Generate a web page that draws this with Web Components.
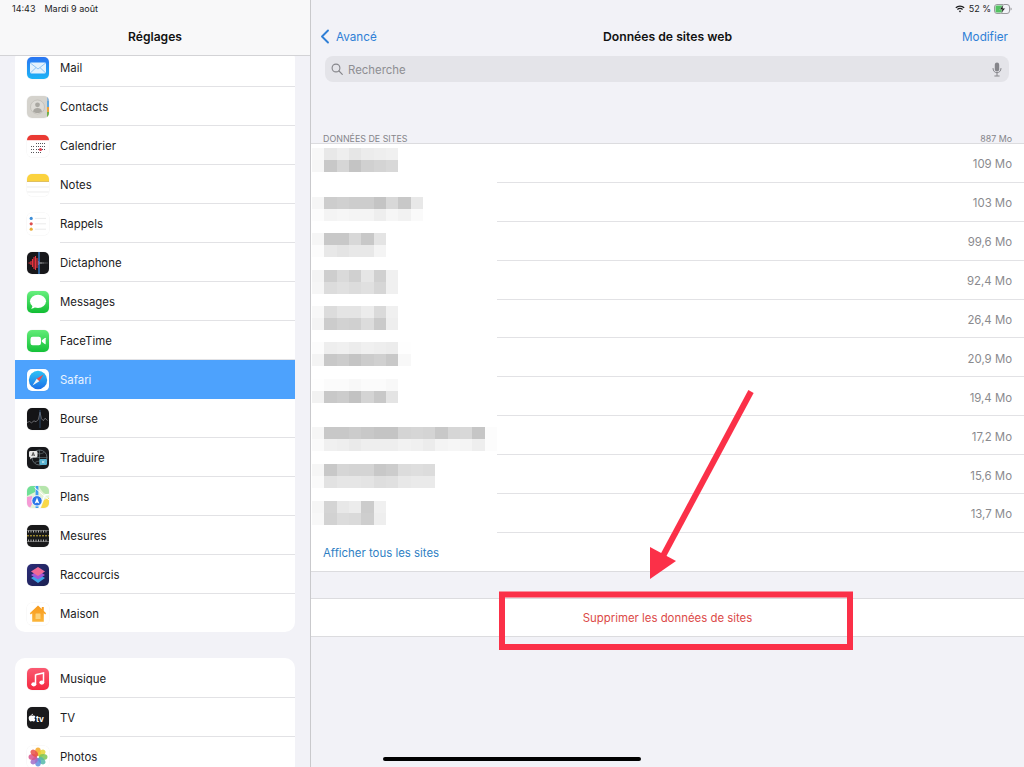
<!DOCTYPE html>
<html lang="fr">
<head>
<meta charset="utf-8">
<title>Réglages</title>
<style>
  html, body { margin: 0; height: 100%; overflow: hidden; background: #f2f2f7; }
  body { font-family: Inter, "Liberation Sans", sans-serif; color: #1c1c1e; }
</style>
</head>
<body>
<settings-app>
  <settings-sidebar slot="sidebar">
    <settings-group>
      <settings-row icon="mail">Mail</settings-row>
      <settings-row icon="contacts">Contacts</settings-row>
      <settings-row icon="calendar">Calendrier</settings-row>
      <settings-row icon="notes">Notes</settings-row>
      <settings-row icon="reminders">Rappels</settings-row>
      <settings-row icon="voice">Dictaphone</settings-row>
      <settings-row icon="messages">Messages</settings-row>
      <settings-row icon="facetime">FaceTime</settings-row>
      <settings-row icon="safari" selected>Safari</settings-row>
      <settings-row icon="stocks">Bourse</settings-row>
      <settings-row icon="translate">Traduire</settings-row>
      <settings-row icon="maps">Plans</settings-row>
      <settings-row icon="measure">Mesures</settings-row>
      <settings-row icon="shortcuts">Raccourcis</settings-row>
      <settings-row icon="home">Maison</settings-row>
    </settings-group>
    <settings-group>
      <settings-row icon="music">Musique</settings-row>
      <settings-row icon="tv">TV</settings-row>
      <settings-row icon="photos">Photos</settings-row>
    </settings-group>
  </settings-sidebar>
  <site-data-pane slot="detail">
    <site-row value="109 Mo" offset="4" cells="f8 e8 ee e6 ec ee f0|f6 c8 d6 c4 d0 d4 d8"></site-row>
    <site-row value="103 Mo" offset="14" cells="f6 cd d0 cd cd c4 d8 c8 e8|fc f4 f6 f4 f4 ee f6 f2 fa"></site-row>
    <site-row value="99,6 Mo" offset="11" cells="f6 c8 c8 d8 c8 e4|fc e8 e4 e8 e8 f4"></site-row>
    <site-row value="92,4 Mo" offset="9" cells="f4 ce da d0 e6 d0 f0|f6 dc e0 dc e0 d6 f0"></site-row>
    <site-row value="26,4 Mo" offset="6" cells="f8 dc e4 e4 ec da f0|f4 cc d2 d0 dc ca ee"></site-row>
    <site-row value="20,9 Mo" offset="4" cells="fc ee f0 ec f0 ee ec fe|f4 c8 cc c4 cc d0 c8 f8"></site-row>
    <site-row value="19,4 Mo" offset="2" cells="fe fb fb f8 fb fb f8|f2 c8 cc c2 d4 c8 e4"></site-row>
    <site-row value="17,2 Mo" offset="11" cells="f6 c8 c8 cc c8 c4 c4 d4 d6 d4 c8 d6 d8 c6 fc|fa f0 ee ea ee ee ee f2 f0 ec f4 f6 f4 ee fc"></site-row>
    <site-row value="15,6 Mo" offset="9" cells="f6 c8 d6 d4 d4 c8 cc dc de dc|fa e2 e6 e6 e4 de e0 e8 ea ea"></site-row>
    <site-row value="13,7 Mo" offset="7" cells="f6 d4 e8 ec cc f0|f8 d2 dc da ce ee"></site-row>
  </site-data-pane>
</settings-app>
<arrow-annotation></arrow-annotation>
<home-indicator></home-indicator>

<script>
const ICONS = {
  mail: `<defs><linearGradient id="g" x1="0" y1="0" x2="0" y2="1"><stop offset="0" stop-color="#2a74f2"/><stop offset="1" stop-color="#1cb4f6"/></linearGradient></defs>
    <rect width="22" height="22" fill="url(#g)"/>
    <rect x="3" y="5.500" width="16" height="11" rx="1.400" fill="#e4f2fd"/>
    <path d="M3.300 6 11 12l7.700-6M3.300 16 9 10.600M18.700 16 13 10.600" fill="none" stroke="#78b9f2" stroke-width=".8"/>`,
  contacts: `<rect width="22" height="22" fill="#d5d3cd"/>
    <rect x="20" y="1" width="2" height="6" fill="#8fb4d8"/><rect x="20" y="5" width="2" height="6" fill="#5fa8e0"/>
    <rect x="20" y="11" width="2" height="5" fill="#eca23a"/><rect x="20" y="16" width="2" height="5" fill="#6cb04a"/>
    <circle cx="10.500" cy="11" r="7" fill="#dddbd6" stroke="#bdbbb5" stroke-width=".7"/>
    <circle cx="10.500" cy="8.800" r="2.400" fill="#a9a7a1"/>
    <path d="M6 15.500c.6-2.600 2.400-3.500 4.500-3.500s3.900.9 4.500 3.500c-1.200 1-2.800 1.500-4.500 1.500s-3.300-.5-4.500-1.500z" fill="#a9a7a1"/>`,
  calendar: `<rect width="22" height="22" fill="#fff"/><rect width="22" height="5.200" fill="#ea3a33"/>
    <g fill="#55555a"><path d="M9 8h1v1H9zM11 8h1v1h-1zM13 8h1v1h-1zM15 8h1v1h-1zM17 8h1v1h-1zM4 11h1v1H4zM6 11h1v1H6zM9 11h1v1H9zM11 11h1v1h-1zM13 11h1v1h-1zM15 11h1v1h-1zM17 11h1v1h-1zM4 14h1v1H4zM6 14h1v1H6zM9 14h1v1H9zM11 14h1v1h-1zM15 14h1v1h-1zM17 14h1v1h-1zM4 17h1v1H4zM6 17h1v1H6zM9 17h1v1H9zM11 17h1v1h-1zM13 17h1v1h-1z"/></g>
    <circle cx="13.500" cy="14.500" r="1.500" fill="#e2384d"/>`,
  notes: `<rect width="22" height="22" fill="#fff"/>
    <rect width="22" height="7" fill="#fbd23e"/><rect y="7" width="22" height=".8" fill="#d7b13a"/>
    <path d="M0 13h22M0 18h22" stroke="#e4e4e4" stroke-width=".7"/>`,
  reminders: `<rect width="22" height="22" fill="#fff"/>
    <circle cx="4.200" cy="5.400" r="1.600" fill="#3f8fd8"/><circle cx="4.200" cy="10.800" r="1.600" fill="#de4f4f"/><circle cx="4.200" cy="16.200" r="1.600" fill="#e9ae3a"/>
    <path d="M8 5.400h11M8 10.800h11M8 16.200h11" stroke="#e6e6e6" stroke-width=".8"/>`,
  voice: `<rect width="22" height="22" fill="#17171a"/>
    <path d="M1.500 11h2M4 9v4M5.500 7v8M7 5v12M8.500 4v14M10 6v10M11.500 9v4" stroke="#e8343f" stroke-width="1.100"/>
    <path d="M13 10v2M14.500 10.500v1M16 10.300v1.400M18 10.600v.8M20 10.700v.6" stroke="#c9c9c9" stroke-width=".9"/>
    <path d="M12 0v22" stroke="#3d8fe6" stroke-width="1.200"/>`,
  messages: `<defs><linearGradient id="g" x1="0" y1="0" x2="0" y2="1"><stop offset="0" stop-color="#68f07f"/><stop offset="1" stop-color="#10bd33"/></linearGradient></defs>
    <rect width="22" height="22" fill="url(#g)"/>
    <ellipse cx="11" cy="10.300" rx="8" ry="6.600" fill="#fff"/>
    <path d="M5.600 14.500c-.2 1.500-.9 2.700-1.800 3.300 1.800 0 3.300-.7 4.300-1.700z" fill="#fff"/>`,
  facetime: `<defs><linearGradient id="g" x1="0" y1="0" x2="0" y2="1"><stop offset="0" stop-color="#62ec78"/><stop offset="1" stop-color="#14c138"/></linearGradient></defs>
    <rect width="22" height="22" fill="url(#g)"/>
    <rect x="3.500" y="6.800" width="10.500" height="8.400" rx="2.200" fill="#fff"/>
    <path d="M14.800 10.200l3-2.300c.4-.3.900 0 .9.400v5.400c0 .5-.5.700-.9.400l-3-2.300z" fill="#fff"/>`,
  safari: `<defs><linearGradient id="g" x1="0" y1="0" x2="0" y2="1"><stop offset="0" stop-color="#2fc2f5"/><stop offset="1" stop-color="#1a6fe8"/></linearGradient></defs>
    <rect width="22" height="22" fill="#fff"/>
    <circle cx="11" cy="11" r="9.200" fill="url(#g)"/>
    <path d="M16.500 5.500 9.700 9.700l2.600 2.600z" fill="#ef4a4a"/>
    <path d="M5.500 16.500l4.200-6.800 2.600 2.600z" fill="#f3f3f3"/>`,
  stocks: `<rect width="22" height="22" fill="#141416"/>
    <path d="M0 14.500l2.500-1 2 1.300 2.500-2 2 1 2.500-2.600 1.500-7 1.400 6.500 2 2 1.600-2.500 2.500 2.300" fill="none" stroke="#8d8d92" stroke-width=".7"/>
    <path d="M13 2v18" stroke="#3a6aa0" stroke-width=".6"/>`,
  translate: `<rect width="22" height="22" fill="#17181b"/>
    <circle cx="12.500" cy="10.500" r="7.500" fill="none" stroke="#7d8a90" stroke-width=".7"/>
    <path d="M5 10.500h15M12.500 3v15M8 5.500c2.800 1.800 6.200 1.800 9 0M8 15.500c2.800-1.800 6.200-1.800 9 0" fill="none" stroke="#7d8a90" stroke-width=".5"/>
    <rect x="2" y="4" width="8.500" height="6.500" rx="1.400" fill="#e8e8e8"/><path d="M3.500 10l-.5 2.500 3-2.500z" fill="#e8e8e8"/>
    <path d="M4.800 9l1.400-3.600L7.600 9M5.300 8h1.800" fill="none" stroke="#222" stroke-width=".7"/>
    <rect x="12.500" y="12" width="7.500" height="6" rx="1.200" fill="#56b0cf"/>
    <path d="M15 14l2.500 2M17.500 14 15 16" stroke="#e6f4f8" stroke-width=".7"/>`,
  maps: `<rect width="22" height="22" fill="#e4f3d6"/>
    <path d="M0 0h8v6L0 10z" fill="#6fe096"/>
    <path d="M12 0h10v9c-4 0-8-4-10-9z" fill="#b5e5ac"/>
    <path d="M0 11l5-1 1 6-3 6H0z" fill="#f59ad6"/>
    <path d="M14 22l3-8 5-2v10z" fill="#f9d848"/>
    <path d="M12.500 22 18 9l4-.5" fill="none" stroke="#fff" stroke-width="1.400"/>
    <path d="M10 0v22" stroke="#3f9df0" stroke-width="2.800"/>
    <path d="M7.500 1.500 22 14" stroke="#fff" stroke-width="1" fill="none"/>
    <circle cx="10" cy="14.800" r="5.200" fill="#2b76e8" stroke="#fff" stroke-width=".9"/>
    <path d="M10 11.500 7.700 17.500l2.300-1 2.300 1z" fill="#fff"/>`,
  measure: `<rect width="22" height="22" fill="#19191a"/>
    <path d="M0 10.800h22" stroke="#e2c33a" stroke-width=".9" stroke-dasharray="2 1"/>
    <path d="M0 5.500h22M0 16.500h22" stroke="#9d9d9d" stroke-width=".6"/>
    <path d="M1.500 5.500v2M4 5.500v2M6.500 5.500v2M9 5.500v2M11.500 5.500v2M14 5.500v2M16.500 5.500v2M19 5.500v2M1.500 16.500v-2M4 16.500v-2M6.500 16.500v-2M9 16.500v-2M11.500 16.500v-2M14 16.500v-2M16.500 16.500v-2M19 16.500v-2" stroke="#d8d8d8" stroke-width=".8"/>`,
  shortcuts: `<defs><linearGradient id="g" x1="0" y1="0" x2="1" y2="1"><stop offset="0" stop-color="#2c2c78"/><stop offset="1" stop-color="#1a2050"/></linearGradient></defs>
    <rect width="22" height="22" fill="url(#g)"/>
    <path d="M11 10 18 14 11 19 4 14z" fill="#3fa4e6"/>
    <path d="M11 6.500 18 11 11 15.500 4 11z" fill="#a257d8"/>
    <path d="M11 3 18 7.500 11 12 4 7.500z" fill="#f06a96"/>`,
  home: `<defs><linearGradient id="g" x1="0" y1="0" x2="0" y2="1"><stop offset="0" stop-color="#f89a1e"/><stop offset="1" stop-color="#fbb53a"/></linearGradient></defs>
    <rect width="22" height="22" fill="#fff"/>
    <path d="M11 2.600 2.800 10.300l1 1.100 1.400-1.200v8.600h11.600v-8.600l1.400 1.200 1-1.100-2.400-2.300V4h-2v2.100z" fill="url(#g)"/>
    <rect x="8.500" y="10.500" width="5" height="5.500" rx=".5" fill="#fcd27a"/>`,
  music: `<defs><linearGradient id="g" x1="0" y1="0" x2="0" y2="1"><stop offset="0" stop-color="#fa5a72"/><stop offset="1" stop-color="#f5283f"/></linearGradient></defs>
    <rect width="22" height="22" fill="url(#g)"/>
    <path d="M8.500 6.800 16.500 5v9.500" fill="none" stroke="#fff" stroke-width="1.500"/>
    <path d="M8.500 6.500v9.500" stroke="#fff" stroke-width="1.500"/>
    <ellipse cx="6.800" cy="16.300" rx="2.500" ry="2.100" fill="#fff"/><ellipse cx="14.800" cy="14.600" rx="2.500" ry="2.100" fill="#fff"/>`,
  tv: `<rect width="22" height="22" fill="#1a1a1c"/>
    <path d="M6.700 8.600c-.7 0-1.200.4-1.600.4s-.9-.4-1.500-.4c-1 0-1.900.9-1.900 2.400 0 1.700 1.200 3.500 2 3.500.5 0 .8-.4 1.400-.4s.9.400 1.400.4c.8 0 1.500-1.200 1.800-2.100-.9-.4-1.100-1.900.1-2.700-.4-.7-1.100-1.100-1.700-1.100z" fill="#fff"/>
    <path d="M5.300 8.400c.4-.5.700-1 .6-1.600-.6.100-1.100.5-1.400 1-.2.300-.3.700-.2 1 .4 0 .8-.1 1-.4z" fill="#fff"/>
    <text x="9" y="14.600" font-family="Inter, sans-serif" font-size="8" font-weight="700" fill="#fff">tv</text>`,
  photos: `<rect width="22" height="22" fill="#fff"/>
    <g transform="translate(11 11)" fill-opacity=".85">
      <ellipse cy="-5.200" rx="2.900" ry="4.300" fill="#f5a623"/>
      <ellipse cy="-5.200" rx="2.900" ry="4.300" fill="#e5d332" transform="rotate(45)"/>
      <ellipse cy="-5.200" rx="2.900" ry="4.300" fill="#7cc455" transform="rotate(90)"/>
      <ellipse cy="-5.200" rx="2.900" ry="4.300" fill="#55b8a8" transform="rotate(135)"/>
      <ellipse cy="-5.200" rx="2.900" ry="4.300" fill="#5e8fe0" transform="rotate(180)"/>
      <ellipse cy="-5.200" rx="2.900" ry="4.300" fill="#a06cc8" transform="rotate(225)"/>
      <ellipse cy="-5.200" rx="2.900" ry="4.300" fill="#d8548c" transform="rotate(270)"/>
      <ellipse cy="-5.200" rx="2.900" ry="4.300" fill="#e8504a" transform="rotate(315)"/>
    </g>`
};

class AppIcon extends HTMLElement {
  connectedCallback() {
    const name = this.getAttribute('name');
    this.attachShadow({ mode: 'open' }).innerHTML = `
      <style>
        :host { display: block; width: 22px; height: 22px; flex: none; }
        svg { display: block; border-radius: 5px; box-shadow: 0 0 0 .5px rgba(0,0,0,.05); }
      </style>
      <svg width="22" height="22" viewBox="0 0 22 22">${ICONS[name] ?? ''}</svg>`;
  }
}

class SettingsRow extends HTMLElement {
  connectedCallback() {
    this.attachShadow({ mode: 'open' }).innerHTML = `
      <style>
        :host {
          display: flex; align-items: center; gap: 11px;
          height: 39px; box-sizing: border-box; padding-left: 12px;
          font-size: 11.400px; color: #1c1c1e;
          background: linear-gradient(#e2e2e5, #e2e2e5) no-repeat right bottom / calc(100% - 45px) 1px;
        }
        :host(:last-child) { background: none; height: 38px; padding-top: 1px; }
        :host([selected]) { background: #4da2fd; color: #e9f3ff; }
      </style>
      <app-icon name="${this.getAttribute('icon')}"></app-icon>
      <slot></slot>`;
  }
}

class SettingsGroup extends HTMLElement {
  constructor() {
    super();
    this.attachShadow({ mode: 'open' }).innerHTML = `
      <style>
        :host { display: block; background: #fff; border-radius: 10px; overflow: hidden; margin-bottom: 26px; }
        :host(:last-child) { padding-top: 1px; }
      </style>
      <slot></slot>`;
  }
}

class StatusBar extends HTMLElement {
  constructor() {
    super();
    this.attachShadow({ mode: 'open' }).innerHTML = `
      <style>
        :host {
          display: flex; align-items: center; height: 16px; box-sizing: border-box;
          font-size: 9px; color: #1c1c1e; padding-top: 1px;
        }
      </style>
      <slot></slot>`;
  }
}

class SettingsSidebar extends HTMLElement {
  constructor() {
    super();
    this.attachShadow({ mode: 'open' }).innerHTML = `
      <style>
        :host { display: flex; flex-direction: column; height: 100%; overflow: hidden; background: #f2f2f7; }
        header { flex: none; height: 56px; box-sizing: border-box; background: #f8f8f9; border-bottom: 1px solid #d3d3d6; position: relative; z-index: 1; }
        status-bar { padding-left: 12px; gap: 9px; }
        h1 { margin: 0; height: 39px; line-height: 41px; text-align: center; font-size: 12.100px; font-weight: 600; color: #111; }
        .scroll { flex: 1; min-height: 0; padding: 0 15px; margin-top: -8px; }
      </style>
      <header>
        <status-bar><span>14:43</span><span>Mardi 9 août</span></status-bar>
        <h1>Réglages</h1>
      </header>
      <div class="scroll"><slot></slot></div>`;
  }
}

class PixelMosaic extends HTMLElement {
  connectedCallback() {
    const lines = this.getAttribute('cells').split('|').map(l => l.split(' '));
    const cols = lines[0].length;
    const cells = lines.flat().map(c => `<i style="background:#${c}${c}${c}"></i>`).join('');
    this.attachShadow({ mode: 'open' }).innerHTML = `
      <style>
        :host { display: grid; grid-template-columns: repeat(${cols}, 12.35px); grid-auto-rows: 12px; align-self: flex-start; }
      </style>
      ${cells}`;
  }
}

class SiteRow extends HTMLElement {
  connectedCallback() {
    this.attachShadow({ mode: 'open' }).innerHTML = `
      <style>
        :host {
          display: flex; justify-content: space-between; align-items: center;
          height: 38.900px; box-sizing: border-box; padding: 0 12px 0 1px;
          background: #fff linear-gradient(#e2e2e5, #e2e2e5) no-repeat right bottom / calc(100% - 186px) 1px;
        }
        pixel-mosaic { margin-top: ${this.getAttribute('offset')}px; }
        span { font-size: 11.400px; color: #8a8a8e; padding-top: 2px; }
      </style>
      <pixel-mosaic cells="${this.getAttribute('cells')}"></pixel-mosaic>
      <span>${this.getAttribute('value')}</span>`;
  }
}

class SearchField extends HTMLElement {
  constructor() {
    super();
    this.attachShadow({ mode: 'open' }).innerHTML = `
      <style>
        :host {
          display: flex; align-items: center; gap: 5px; height: 26px; box-sizing: border-box;
          margin: 0 15px 0 14px; padding: 0 7px 0 6px; border-radius: 8px;
          background: #e4e4e9; font-size: 11.400px; color: #8e8e93;
        }
        span { flex: 1; padding-top: 2px; }
        svg { display: block; flex: none; }
      </style>
      <svg width="12" height="12" viewBox="0 0 12 12" fill="none" stroke="#85858a" stroke-width="1.100" stroke-linecap="round"><circle cx="5" cy="5" r="3.900"/><path d="M8 8l3.300 3.300"/></svg>
      <span>Recherche</span>
      <svg width="10" height="15" viewBox="0 0 10 15" fill="none" stroke="#85858a" stroke-width="1"><rect x="2.800" y="0.500" width="4.400" height="9" rx="2.200" fill="#85858a" stroke="none"/><path d="M1 6.500c0 2.500 1.800 4.200 4 4.200s4-1.700 4-4.200M5 10.700v2.800M2.800 14h4.400" stroke-linecap="round"/></svg>`;
  }
}

class SiteDataPane extends HTMLElement {
  constructor() {
    super();
    this.attachShadow({ mode: 'open' }).innerHTML = `
      <style>
        :host { display: flex; flex-direction: column; height: 100%; background: #f2f2f7; }
        status-bar { justify-content: flex-end; padding-right: 12px; gap: 4px; }
        status-bar svg { display: block; }
        status-bar svg:last-child { margin-left: -1px; }
        nav {
          display: grid; grid-template-columns: 1fr auto 1fr; align-items: center;
          height: 40px; padding: 0 16px; font-size: 11.700px;
        }
        .back { display: flex; align-items: center; gap: 6px; margin-left: -7px; color: #2f7fd6; }
        .back span { padding-top: 2px; }
        .edit { justify-self: end; color: #2f7fd6; padding-top: 2px; }
        .title { font-weight: 600; font-size: 12.200px; color: #111; }
        .label {
          display: flex; justify-content: space-between; align-items: flex-end;
          height: 61px; box-sizing: border-box; padding: 0 12px; font-size: 8.900px; line-height: 9px; color: #85858a;
        }
        .list { border-top: 1px solid #dcdcdf; }
        .all {
          display: flex; align-items: center; height: 39px; box-sizing: border-box; padding: 2px 0 0 12px;
          background: #fff; border-bottom: 1px solid #dcdcdf; font-size: 11.400px; color: #2f7fc4;
        }
        .danger {
          display: flex; align-items: center; justify-content: center; height: 39px; box-sizing: border-box; padding-top: 2px;
          margin-top: 26px; background: #fff; border-top: 1px solid #dcdcdf; border-bottom: 1px solid #dcdcdf;
          font-size: 11.400px; color: #dc4a48;
        }
      </style>
      <status-bar>
        <svg width="10" height="8" viewBox="0 0 10 8" fill="none" stroke="#1c1c1e" stroke-width="1.200"><path d="M.8 2.800a6 6 0 0 1 8.400 0M2.400 4.500a3.800 3.800 0 0 1 5.200 0"/><path d="M5 7.500 3.800 6.100a1.800 1.800 0 0 1 2.400 0z" fill="#1c1c1e" stroke="none"/></svg>
        <span>52 %</span>
        <svg width="18" height="10" viewBox="0 0 18 10"><rect x=".5" y=".5" width="15" height="9" rx="2.500" fill="none" stroke="#9a9a9e"/><rect x="1.500" y="1.500" width="7.500" height="7" rx="1.300" fill="#53c262"/><path d="M16.500 3.500c.8.200 1.200.8 1.200 1.500s-.4 1.300-1.200 1.500z" fill="#9a9a9e"/><path d="M9.500 .3 5.800 5.600h2.500L7 9.700l4.200-5.400H8.700z" fill="#111" stroke="#f2f2f7" stroke-width=".4"/></svg>
      </status-bar>
      <nav>
        <span class="back"><svg width="10" height="15" viewBox="0 0 10 15" fill="none" stroke="#2f7fd6" stroke-width="1.900" stroke-linecap="round" stroke-linejoin="round"><path d="M8 1.500 2 7.500l6 6"/></svg><span>Avancé</span></span>
        <span class="title">Données de sites web</span>
        <span class="edit">Modifier</span>
      </nav>
      <search-field></search-field>
      <div class="label"><span>DONNÉES DE SITES</span><span>887 Mo</span></div>
      <div class="list"><slot></slot></div>
      <div class="all">Afficher tous les sites</div>
      <div class="danger">Supprimer les données de sites</div>`;
  }
}

class SettingsApp extends HTMLElement {
  constructor() {
    super();
    this.attachShadow({ mode: 'open' }).innerHTML = `
      <style>
        :host { display: grid; grid-template-columns: 310px 1fr; gap: 1px; width: 1024px; height: 767px; background: #c9c9cc; overflow: hidden; }
      </style>
      <slot name="sidebar"></slot>
      <slot name="detail"></slot>`;
  }
}

// red arrow and frame drawn on top of the screenshot
class ArrowAnnotation extends HTMLElement {
  constructor() {
    super();
    this.attachShadow({ mode: 'open' }).innerHTML = `
      <style>
        :host { position: absolute; left: 0; top: 0; pointer-events: none; }
        svg { display: block; }
      </style>
      <svg width="1024" height="767" viewBox="0 0 1024 767">
        <rect x="502" y="594.500" width="348" height="52.500" fill="none" stroke="#fb3048" stroke-width="6"/>
        <path d="M751 391.500 663 556" fill="none" stroke="#fb3048" stroke-width="6"/>
        <path d="M650 579V547L676 561z" fill="#fb3048"/>
      </svg>`;
  }
}

class HomeIndicator extends HTMLElement {
  constructor() {
    super();
    this.attachShadow({ mode: 'open' }).innerHTML = `
      <style>
        :host { position: absolute; left: 383px; top: 757px; width: 258px; height: 4px; border-radius: 2px; background: #000; }
      </style>`;
  }
}

customElements.define('app-icon', AppIcon);
customElements.define('settings-row', SettingsRow);
customElements.define('settings-group', SettingsGroup);
customElements.define('status-bar', StatusBar);
customElements.define('settings-sidebar', SettingsSidebar);
customElements.define('pixel-mosaic', PixelMosaic);
customElements.define('site-row', SiteRow);
customElements.define('search-field', SearchField);
customElements.define('site-data-pane', SiteDataPane);
customElements.define('settings-app', SettingsApp);
customElements.define('arrow-annotation', ArrowAnnotation);
customElements.define('home-indicator', HomeIndicator);
</script>
</body>
</html>
